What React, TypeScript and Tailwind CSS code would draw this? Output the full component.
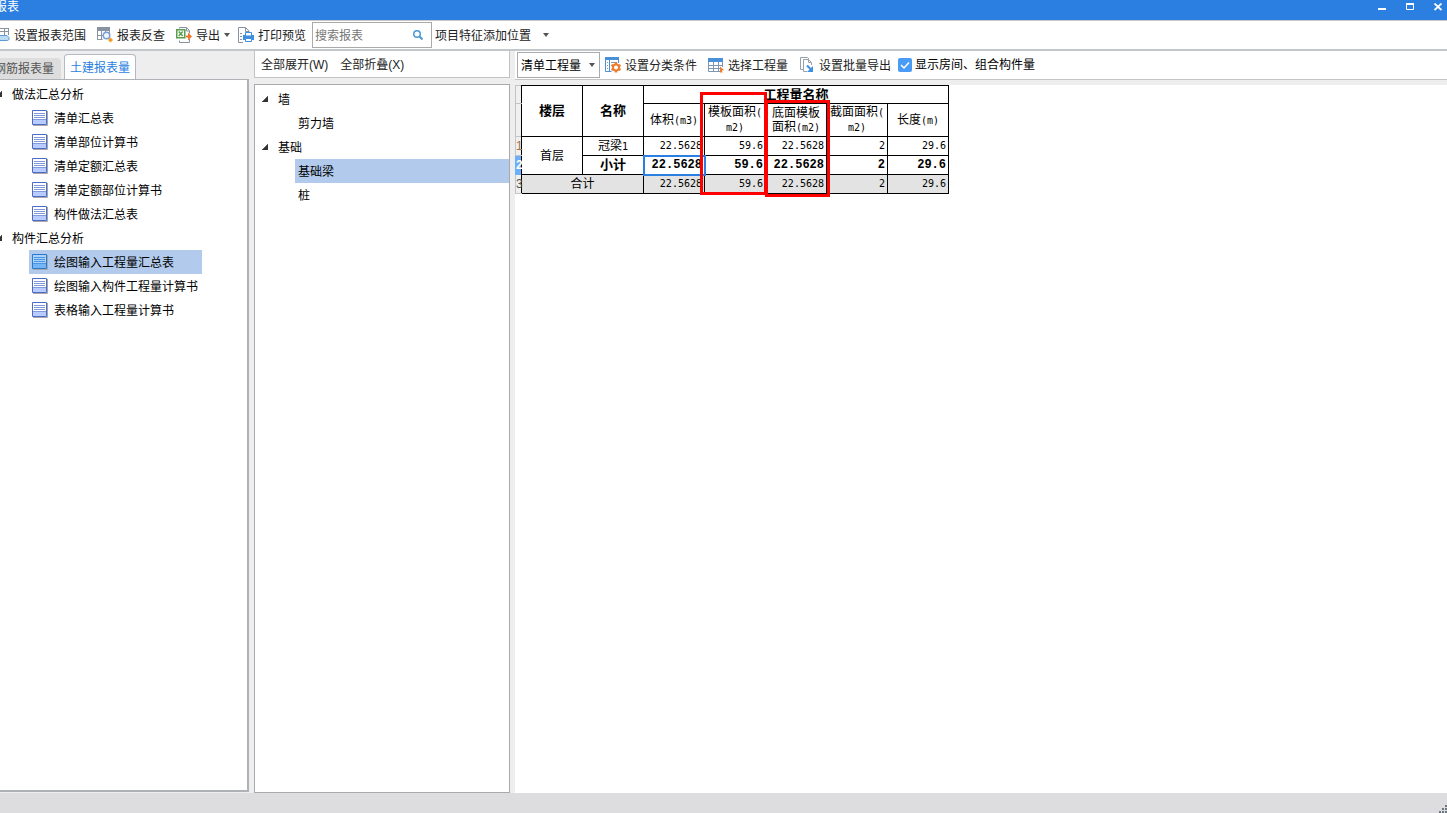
import type { ReactNode } from "react";

const leftGroups = [
  {
    title: "做法汇总分析",
    items: ["清单汇总表", "清单部位计算书", "清单定额汇总表", "清单定额部位计算书", "构件做法汇总表"],
  },
  {
    title: "构件汇总分析",
    items: ["绘图输入工程量汇总表", "绘图输入构件工程量计算书", "表格输入工程量计算书"],
  },
];

const middleGroups = [
  { title: "墙", items: ["剪力墙"] },
  { title: "基础", items: ["基础梁", "桩"] },
];

function Caret() {
  return (
    <svg width="6" height="4" viewBox="0 0 6 4" className="shrink-0" aria-hidden="true">
      <path d="M0 0h6L3 4z" fill="#555" />
    </svg>
  );
}

function Expander() {
  return (
    <svg width="6" height="6" viewBox="0 0 6 6" className="shrink-0" aria-hidden="true">
      <path d="M6 0v6H0z" fill="#333" stroke="#333" strokeWidth=".5" />
    </svg>
  );
}

function RangeIcon() {
  return (
    <svg width="16" height="16" viewBox="0 0 16 16" fill="none" className="shrink-0" aria-hidden="true">
      <path d="M1 1.5h13.500M1 4.500h13.500M5.500 1v7M10.500 1v7M14.500 1v7" stroke="#8a949e" />
      <path d="M.5 8.500h12.500l2 2v2l-1.500 1H.5z" fill="#bcdcf5" stroke="#5b9bd5" />
    </svg>
  );
}

function CheckBackIcon() {
  return (
    <svg width="16" height="16" viewBox="0 0 16 16" fill="none" className="shrink-0" aria-hidden="true">
      <path d="M0 0h13v4H0z" fill="#8793a0" />
      <path d="M.5 4v8.500h5M4.500 4v8.500M8.500 4v2M12.500 4v2M0 8.500h6" stroke="#8793a0" />
      <circle cx="9.500" cy="8.500" r="3.250" fill="#eef5fd" stroke="#7d9fd8" strokeWidth="1.500" />
      <path d="M13.500 10.500l2.500 2.500-2.500 2.500L11 13z" fill="#f59a1b" />
    </svg>
  );
}

function ExportIcon() {
  return (
    <svg width="16" height="16" viewBox="0 0 16 16" fill="none" className="shrink-0" aria-hidden="true">
      <path d="M3.500 1.500V.5h7l3 3v3M13.500 12v3.500h-10v-2M10.500.5v3.500h3" stroke="#8793a0" />
      <path d="M.75 2.750h8v8h-8z" fill="#fff" stroke="#5a9e4b" strokeWidth="1.500" />
      <path d="M2.750 4.500l4 4.500M6.750 4.500l-4 4.500" stroke="#5a9e4b" strokeWidth="1.500" />
      <path d="M10 8.500h2V5.500l4 4-4 4v-3h-2z" fill="#f0782d" />
    </svg>
  );
}

function PrintIcon() {
  return (
    <svg width="16" height="16" viewBox="0 0 16 16" fill="none" className="shrink-0" aria-hidden="true">
      <path d="M5 15.500H.5V.5h7l3.500 3.500v2M7.500.5v4H11" stroke="#8793a0" />
      <path d="M2 6.500h2M2 9.500h2M2 12.500h2" stroke="#8793a0" />
      <path d="M5 8h11v5H5z" fill="#3f8fe0" />
      <path d="M7.500 5.500h6V9h-6zM7.500 11.500h6v3h-6z" fill="#fff" stroke="#3f8fe0" />
    </svg>
  );
}

function ConditionIcon() {
  return (
    <svg width="16" height="16" viewBox="0 0 16 16" fill="none" className="shrink-0" aria-hidden="true">
      <path d="M0 0h14v3H0z" fill="#4a90d9" />
      <path d="M.5 3v11.500h6M4.500 3v11M13.500 3v3" stroke="#4a90d9" />
      <path d="M2 5.500h1M2 8.500h1M2 11.500h1M6 5.500h6M6 8.500h1" stroke="#8a949e" />
      <circle cx="11" cy="10.500" r="3" fill="#fff" stroke="#ed7d31" strokeWidth="2" />
      <path d="M11 5.500v2M11 13.500v2M6.500 8l2 1M13.500 12l2 1M6.500 13l2-1M13.500 9l2-1" stroke="#ed7d31" strokeWidth="2.500" />
    </svg>
  );
}

function SelectIcon() {
  return (
    <svg width="16" height="15" viewBox="0 0 16 15" fill="none" className="shrink-0" aria-hidden="true">
      <path d="M0 0h15v4H0z" fill="#4a90d9" />
      <path d="M.5 4v9.500H12M14.500 4v5M5.500 4v9.500M10.500 4v9.500M0 7.500h15M0 10.500h12" stroke="#7d98b4" />
      <path d="M12 8.500l4 3.500-2 .5.500 2h-2.500z" fill="#ed7d31" />
    </svg>
  );
}

function BatchIcon() {
  return (
    <svg width="16" height="16" viewBox="0 0 16 16" fill="none" className="shrink-0" aria-hidden="true">
      <path d="M4 12.500H1.500V.5h7L10 2" stroke="#98a2ac" />
      <path d="M8 14.500H4.500v-12h5l3 3V8M9.500 2.500v3h3" fill="#fff" stroke="#98a2ac" />
      <path d="M8 8.500l4 4" stroke="#3f8fe0" strokeWidth="2" />
      <path d="M14 9v6H8z" fill="#3f8fe0" />
    </svg>
  );
}

function ReportIcon({ active }: { active: boolean }) {
  return (
    <svg width="16" height="16" viewBox="0 0 16 16" fill="none" className="shrink-0" aria-hidden="true">
      <path d="M1 15.500h14.500V1" stroke="#a8a8a8" />
      <path d="M.5.5h14v14H.5z" fill={active ? "#a9d3fb" : "#fff"} />
      <path d="M1 10h13v4H1z" fill={active ? "#74b5f6" : "#b9ccff"} />
      <path d="M2 3.500h11M2 5.500h11M2 7.500h11M1 9.500h13" stroke={active ? "#4a94e0" : "#8298d8"} />
      <path d="M.5.5h14v14H.5z" stroke={active ? "#2a78d0" : "#4a6cc8"} />
    </svg>
  );
}

function ToolButton({ icon, children }: { icon?: ReactNode; children: ReactNode }) {
  return (
    <button type="button" className="flex h-6 shrink-0 items-center gap-1 whitespace-nowrap">
      {icon}
      <span className="pt-[2px]">{children}</span>
    </button>
  );
}

// Latin characters in the sheet use a half-width mono face
function Mono({ children }: { children: ReactNode }) {
  return <span className="font-['DejaVu_Sans_Mono',monospace] text-[10px]">{children}</span>;
}

const cell = "border border-black p-0 text-center font-normal";
const num = "border border-black p-0 pr-[2px] text-right font-['DejaVu_Sans_Mono',monospace] text-[10px]";
const boldNum = "border border-black p-0 pr-[2px] text-right font-['Liberation_Mono',monospace] text-xs font-bold";
const rowHead = "border border-[#c4c4c4] border-r-black bg-[#f0f0f0] p-0 text-left text-xs font-normal";

function ReportTable() {
  return (
    <div className="relative w-[434px]">
      <table className="w-full table-fixed border-collapse text-xs leading-[14px] text-black">
        <colgroup>
          <col className="w-[6px]" />
          <col className="w-[61px]" />
          <col className="w-[61px]" />
          <col className="w-[61px]" />
          <col className="w-[61px]" />
          <col className="w-[61px]" />
          <col className="w-[61px]" />
          <col className="w-[61px]" />
        </colgroup>
        <thead>
          <tr className="h-[18px]">
            <td className={rowHead}></td>
            <th rowSpan={2} className="border border-black p-0 text-[13px] font-bold">楼层</th>
            <th rowSpan={2} className="border border-black p-0 text-[13px] font-bold">名称</th>
            <th colSpan={5} className="border border-black p-0 text-[13px] font-bold">工程量名称</th>
          </tr>
          <tr className="h-[33px]">
            <td className={rowHead}></td>
            <th className={cell}>体积<Mono>(m3)</Mono></th>
            <th className={cell}>模板面积<Mono>(<br />m2)</Mono></th>
            <th className={cell}>底面模板<br />面积<Mono>(m2)</Mono></th>
            <th className={cell}>截面面积<Mono>(<br />m2)</Mono></th>
            <th className={cell}>长度<Mono>(m)</Mono></th>
          </tr>
        </thead>
        <tbody>
          <tr className="h-[19px]">
            <td className={`${rowHead} text-[#a07040]`}>1</td>
            <td rowSpan={2} className={cell}>首层</td>
            <td className={cell}>冠梁<Mono>1</Mono></td>
            <td className={num}>22.5628</td>
            <td className={num}>59.6</td>
            <td className={num}>22.5628</td>
            <td className={num}>2</td>
            <td className={num}>29.6</td>
          </tr>
          <tr className="h-[19px]">
            <td className="border border-[#6cb0fa] border-r-black bg-[#6cb0fa] p-0 text-left font-bold text-white">2</td>
            <td className="border border-black p-0 text-center text-[13px] font-bold">小计</td>
            <td className={`${boldNum} outline-2 -outline-offset-1 outline-[#2b7fe0]`}>22.5628</td>
            <td className={boldNum}>59.6</td>
            <td className={boldNum}>22.5628</td>
            <td className={boldNum}>2</td>
            <td className={boldNum}>29.6</td>
          </tr>
          <tr className="h-[19px] bg-[#e3e3e3]">
            <td className={`${rowHead} text-[#555]`}>3</td>
            <td colSpan={2} className={cell}>合计</td>
            <td className={num}>22.5628</td>
            <td className={num}>59.6</td>
            <td className={num}>22.5628</td>
            <td className={num}>2</td>
            <td className={num}>29.6</td>
          </tr>
        </tbody>
      </table>
      <div className="pointer-events-none absolute top-[7px] left-[185px] h-[103px] w-[67px] border-3 border-[#f00]" />
      <div className="pointer-events-none absolute top-[15px] left-[250px] h-[97px] w-[65px] border-3 border-[#f00]" />
    </div>
  );
}

export default function App() {
  return (
    <div className="flex h-screen flex-col overflow-hidden bg-[#eee] font-['Liberation_Sans','Noto_Sans_CJK_SC',sans-serif] text-xs leading-[16px] text-[#222]">
      <header className="flex h-5 shrink-0 items-start justify-between bg-[#2b7fe0] text-white">
        <h1 className="-ml-[5px] leading-[14px]">报表</h1>
        <div className="flex gap-5 pt-[3px] pr-[5px]">
          <button type="button" aria-label="最小化">
            <svg width="8" height="8" viewBox="0 0 8 8"><path d="M0 5h8v2H0z" fill="#fff" /></svg>
          </button>
          <button type="button" aria-label="最大化">
            <svg width="8" height="8" viewBox="0 0 8 8" fill="none"><path d="M.5 1v5.500h7V1" stroke="#fff" /><path d="M0 0h8v2H0z" fill="#fff" /></svg>
          </button>
          <button type="button" aria-label="关闭">
            <svg width="8" height="8" viewBox="0 0 8 8" fill="none"><path d="M.5.5l7 6.500M7.500.5l-7 6.500" stroke="#fff" strokeWidth="1.750" /></svg>
          </button>
        </div>
      </header>

      <div className="flex h-[31px] shrink-0 items-center border-t border-b-2 border-t-[#c8c8c8] border-b-[#c2c6cd] bg-white">
        <div className="-ml-[6px] flex shrink-0 items-center gap-[11px]">
          <ToolButton icon={<RangeIcon />}>设置报表范围</ToolButton>
          <ToolButton icon={<CheckBackIcon />}>报表反查</ToolButton>
          <div className="flex items-center gap-1">
            <ToolButton icon={<ExportIcon />}>导出</ToolButton>
            <Caret />
          </div>
        </div>
        <div className="ml-2 flex shrink-0 items-center">
          <ToolButton icon={<PrintIcon />}>打印预览</ToolButton>
          <label className="ml-[6px] flex h-[26px] w-[120px] items-center border border-[#aaa] bg-white pr-2 pl-[2px]">
            <input type="text" aria-label="搜索报表" placeholder="搜索报表" className="min-w-0 flex-1 pt-[2px] outline-none placeholder:text-[#777]" />
            <svg width="10" height="10" viewBox="0 0 10 10" fill="none" aria-hidden="true">
              <circle cx="4" cy="4" r="3.250" stroke="#4a9ad4" strokeWidth="1.500" />
              <path d="M6.500 6.500L9.500 9.500" stroke="#4a9ad4" strokeWidth="2" />
            </svg>
          </label>
          <div className="ml-[3px] flex items-center gap-3">
            <ToolButton>项目特征添加位置</ToolButton>
            <Caret />
          </div>
        </div>
      </div>

      <main className="flex min-h-0 flex-1">
        <aside className="mr-[5px] flex w-[249px] shrink-0 flex-col pb-px">
          <div className="flex h-7 shrink-0 items-end gap-[3px]" role="tablist">
            <button type="button" role="tab" aria-selected="false" className="-ml-[6px] h-[21px] w-[67px] rounded-t-sm bg-[#ddd] pr-[7px] text-right whitespace-nowrap text-[#555]">钢筋报表量</button>
            <button type="button" role="tab" aria-selected="true" className="h-[25px] w-[72px] rounded-t border border-b-0 border-[#b4b8c0] bg-white pt-[2px] text-center whitespace-nowrap text-[#2b7fe0]">土建报表量</button>
          </div>
          <div className="min-h-0 flex-1 border-t border-r-2 border-b-2 border-[#aeb1b6] bg-white pt-[2px]">
            {leftGroups.map((group) => (
              <section key={group.title}>
                <h2 className="-ml-1 flex h-6 items-center gap-[10px] text-black">
                  <Expander />
                  <span className="pt-[2px]">{group.title}</span>
                </h2>
                <ul>
                  {group.items.map((item) => {
                    const active = item === "绘图输入工程量汇总表";
                    return (
                      <li key={item} className="pl-[29px]">
                        <button type="button" className={`flex h-6 items-center gap-[6px] pl-[3px] whitespace-nowrap text-black ${active ? "w-[173px] bg-[#b2cbec]" : ""}`}>
                          <ReportIcon active={active} />
                          <span className="pt-[2px]">{item}</span>
                        </button>
                      </li>
                    );
                  })}
                </ul>
              </section>
            ))}
          </div>
        </aside>

        <section className="mr-[5px] flex w-64 shrink-0 flex-col gap-[6px]">
          <div className="flex h-[27px] shrink-0 items-center gap-3 border border-t-0 border-[#c2c2c2] bg-white pl-[6px]">
            <ToolButton>全部展开(W)</ToolButton>
            <ToolButton>全部折叠(X)</ToolButton>
          </div>
          <div className="min-h-0 flex-1 border border-[#aaa] bg-white pt-[2px]">
            {middleGroups.map((group) => (
              <div key={group.title}>
                <h2 className="flex h-6 items-center gap-[10px] pl-[7px] text-black">
                  <Expander />
                  <span className="pt-[2px]">{group.title}</span>
                </h2>
                <ul>
                  {group.items.map((item) => (
                    <li key={item} className="pl-10">
                      <button type="button" className={`flex h-6 w-full items-center pl-[3px] text-black ${item === "基础梁" ? "bg-[#b2cbec]" : ""}`}>
                        <span className="pt-[2px]">{item}</span>
                      </button>
                    </li>
                  ))}
                </ul>
              </div>
            ))}
          </div>
        </section>

        <section className="flex min-w-0 flex-1 flex-col">
          <div className="flex h-[29px] shrink-0 items-center border-b border-[#c4c4c4] bg-white pl-[2px]">
            <div className="relative flex w-[83px] items-center">
              <select aria-label="工程量类型" className="h-[26px] w-full appearance-none border border-[#aaa] bg-white pt-[2px] pl-[3px] text-black">
                <option>清单工程量</option>
              </select>
              <span className="pointer-events-none absolute right-[5px]"><Caret /></span>
            </div>
            <div className="ml-[5px] flex items-center gap-[11px]">
              <ToolButton icon={<ConditionIcon />}>设置分类条件</ToolButton>
              <ToolButton icon={<SelectIcon />}>选择工程量</ToolButton>
              <ToolButton icon={<BatchIcon />}>设置批量导出</ToolButton>
            </div>
            <label className="ml-[7px] flex items-center gap-[3px] whitespace-nowrap text-black">
              <span className="relative flex">
                <input type="checkbox" defaultChecked className="h-[14px] w-[14px] appearance-none rounded-xs bg-[#4a9bf5]" />
                <svg width="14" height="14" viewBox="0 0 14 14" fill="none" className="pointer-events-none absolute inset-0" aria-hidden="true">
                  <path d="M3 7l3 3 5-5.500" stroke="#fff" strokeWidth="1.500" />
                </svg>
              </span>
              显示房间、组合构件量
            </label>
          </div>
          <div className="mt-[5px] min-h-0 flex-1 bg-white">
            <ReportTable />
          </div>
        </section>
      </main>

      <footer className="flex h-5 shrink-0 items-end justify-end bg-[#dddde0]">
        <svg width="9" height="9" viewBox="0 0 9 9" aria-hidden="true">
          <path d="M7 1h2v2H7zM4 4h2v2H4zM7 4h2v2H7zM1 7h2v2H1zM4 7h2v2H4zM7 7h2v2H7z" fill="#6c7680" />
        </svg>
      </footer>
    </div>
  );
}
